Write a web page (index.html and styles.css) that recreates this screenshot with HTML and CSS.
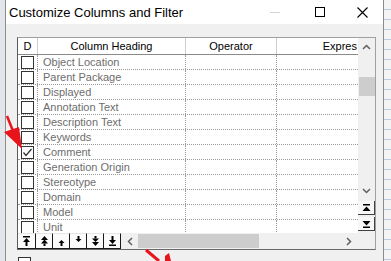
FILE: index.html
```html
<!DOCTYPE html>
<html lang="en">
<head>
    <meta charset="UTF-8">
    <meta name="viewport" content="width=device-width, initial-scale=1.0">
    <title>Customize Columns and Filter</title>
    <link rel="stylesheet" href="styles.css">
</head>
<body>
    <div class="desk">
        <div class="edge-left"></div>
        <div class="dialog">
            <div class="titlebar">
                <span class="title">Customize Columns and Filter</span>
                <div class="caption">
                    <span class="cap"><span class="cap-min"></span></span>
                    <span class="cap"><span class="cap-max"></span></span>
                    <span class="cap cap-close">
                        <svg width="11" height="11" viewBox="0 0 11 11"><path d="M0.5 0.5 L10.5 10.5 M10.5 0.5 L0.5 10.5" stroke="#000" stroke-width="1.1" fill="none"/></svg>
                    </span>
                </div>
            </div>
            <div class="dialog-body">
                <div class="grid">
                    <div class="grid-main">
                        <div class="table">
                            <div class="thead">
                                <div class="th">D</div>
                                <div class="th">Column Heading</div>
                                <div class="th">Operator</div>
                                <div class="th th-last">Expres</div>
                            </div>
                            <div class="rows" id="rows"></div>
                        </div>
                        <div class="vscroll">
                            <div class="vs-arrow">
                                <svg width="9" height="6" viewBox="0 0 9 6"><polyline points="1,5 4.5,1.5 8,5" stroke="#606060" stroke-width="1.5" fill="none"/></svg>
                            </div>
                            <div class="vs-track"><div class="vs-thumb"></div></div>
                            <div class="vs-arrow">
                                <svg width="9" height="6" viewBox="0 0 9 6"><polyline points="1,1 4.5,4.5 8,1" stroke="#606060" stroke-width="1.5" fill="none"/></svg>
                            </div>
                            <div class="vs-btn">
                                <svg width="9" height="8" viewBox="0 0 9 8"><rect x="1" y="0" width="7" height="1.5" fill="#000"/><polygon points="4.5,2.5 8.5,7 0.5,7" fill="#000"/></svg>
                            </div>
                            <div class="vs-btn">
                                <svg width="9" height="8" viewBox="0 0 9 8"><polygon points="0.5,1 8.5,1 4.5,5.5" fill="#000"/><rect x="1" y="6.5" width="7" height="1.5" fill="#000"/></svg>
                            </div>
                        </div>
                    </div>
                    <div class="grid-foot">
                        <div class="nav-btns">
                            <span class="navbtn first">
                                <svg width="9" height="10" viewBox="0 0 9 10"><rect x="1" y="0" width="7" height="1.5"/><polygon points="4.5,2 8,6 1,6"/><rect x="3.5" y="6" width="2" height="4"/></svg>
                            </span>
                            <span class="navbtn">
                                <svg width="9" height="10" viewBox="0 0 9 10"><polygon points="4.5,0 8,4 1,4"/><polygon points="4.5,3.5 8,7.5 1,7.5"/><rect x="3.5" y="7.5" width="2" height="2.5"/></svg>
                            </span>
                            <span class="navbtn">
                                <svg width="9" height="10" viewBox="0 0 9 10"><polygon points="4.5,4 7.5,7 1.5,7"/><rect x="3.5" y="7" width="2" height="3"/></svg>
                            </span>
                            <span class="navbtn">
                                <svg width="9" height="10" viewBox="0 0 9 10"><rect x="3.5" y="0" width="2" height="3"/><polygon points="1.5,3 7.5,3 4.5,6"/></svg>
                            </span>
                            <span class="navbtn">
                                <svg width="9" height="10" viewBox="0 0 9 10"><rect x="3.5" y="0" width="2" height="2.5"/><polygon points="1,2.5 8,2.5 4.5,6"/><polygon points="1,6 8,6 4.5,10"/></svg>
                            </span>
                            <span class="navbtn">
                                <svg width="9" height="10" viewBox="0 0 9 10"><rect x="3.5" y="0" width="2" height="4"/><polygon points="1,4 8,4 4.5,8"/><rect x="1" y="8.5" width="7" height="1.5"/></svg>
                            </span>
                        </div>
                        <div class="hscroll">
                            <div class="hs-arrow">
                                <svg width="6" height="9" viewBox="0 0 6 9"><polyline points="5,1 1.5,4.5 5,8" stroke="#606060" stroke-width="1.5" fill="none"/></svg>
                            </div>
                            <div class="hs-track"><div class="hs-thumb"></div></div>
                            <div class="hs-arrow">
                                <svg width="6" height="9" viewBox="0 0 6 9"><polyline points="1,1 4.5,4.5 1,8" stroke="#606060" stroke-width="1.5" fill="none"/></svg>
                            </div>
                        </div>
                        <div class="corner"></div>
                    </div>
                </div>
                <div class="below"><span class="box"></span></div>
            </div>
        </div>
        <div class="edge-right"></div>
    </div>

    <svg class="marks" width="391" height="261" viewBox="0 0 391 261">
        <path d="M7 116 L13 131" stroke="#e8141b" stroke-width="2.5" fill="none"/>
        <polygon points="22,149 4,132 19,127" fill="#e8141b"/>
        <path d="M146 250 L159 261" stroke="#e8141b" stroke-width="3" fill="none"/>
        <polygon points="165,256 169,253 171,261 165,261" fill="#e8141b"/>
    </svg>

    <script>
        const FIELDS = [
            "Object Location", "Parent Package", "Displayed", "Annotation Text",
            "Description Text", "Keywords", "Comment", "Generation Origin",
            "Stereotype", "Domain", "Model", "Unit"
        ];
        const CHECKED = ["Comment"];

        const rows = document.getElementById("rows");
        FIELDS.forEach(name => {
            const row = document.createElement("div");
            row.className = "row";
            const mark = CHECKED.includes(name)
                ? '<svg width="11" height="11" viewBox="0 0 11 11"><polyline points="1.5,5.5 4,8.5 9.5,2" stroke="#333" stroke-width="1.3" fill="none"/></svg>'
                : "";
            row.innerHTML = `
                <div class="cell cell-check"><span class="box">${mark}</span></div>
                <div class="cell cell-name">${name}</div>
                <div class="cell"></div>
                <div class="cell cell-last"></div>`;
            rows.appendChild(row);
        });
    </script>
</body>
</html>
```

FILE: styles.css
```css
* {
    margin: 0;
    padding: 0;
    box-sizing: border-box;
}

body {
    width: 391px;
    height: 261px;
    overflow: hidden;
    position: relative;
    font-family: "Liberation Sans", Arial, sans-serif;
    font-size: 11px;
    background: #f0f0f0;
}

.desk {
    display: flex;
    height: 261px;
}

.edge-left {
    width: 6px;
    background: #e2e6ea;
    border-right: 1px solid #8c8c8c;
}

.edge-right {
    width: 8px;
    background: repeating-linear-gradient(to bottom, #f4f4f4 0, #f4f4f4 9px, #b9c9de 9px, #b9c9de 10px);
    border-left: 1px solid #8c8c8c;
}

.dialog {
    width: 377px;
    display: flex;
    flex-direction: column;
    overflow: hidden;
}

.titlebar {
    height: 24px;
    background: #fff;
    display: flex;
    align-items: center;
}

.title {
    padding-left: 3px;
    font-size: 13px;
    color: #000;
}

.caption {
    margin-left: auto;
    display: flex;
    height: 24px;
}

.cap {
    width: 45px;
    display: flex;
    align-items: center;
    justify-content: center;
}

.cap-close {
    width: 41px;
}

.cap-min {
    width: 10px;
    height: 1px;
    background: #d4d4d4;
}

.cap-max {
    width: 10px;
    height: 10px;
    border: 1px solid #000;
}

.dialog-body {
    flex: 1;
    padding: 13px 0 0 11px;
    background: #f0f0f0;
}

.grid {
    width: 359px;
    background: #fff;
    border: 1px solid #a0a0a0;
    border-left-color: #5a5a5a;
    border-bottom-color: #6a6a6a;
}

.grid-main {
    display: flex;
    height: 195px;
}

.table {
    width: 340px;
    overflow: hidden;
    display: flex;
    flex-direction: column;
}

.thead,
.row {
    display: grid;
    grid-template-columns: 20px 148px 91px 81px;
}

.thead {
    height: 17px;
    border-bottom: 1px solid #8a8a8a;
}

.th {
    border-right: 1px solid #cfcfcf;
    text-align: center;
    line-height: 16px;
    color: #000;
    white-space: nowrap;
}

.th-last {
    border-right: none;
    text-align: right;
    padding-right: 1px;
}

.rows {
    height: 178px;
    overflow: hidden;
}

.row {
    height: 15px;
    border-bottom: 1px dotted #9a9a9a;
}

.cell {
    border-right: 1px dotted #9a9a9a;
    white-space: nowrap;
}

.cell-last {
    border-right: none;
}

.cell-check {
    display: flex;
    align-items: flex-end;
    padding-left: 3px;
}

.box {
    display: inline-flex;
    align-items: center;
    justify-content: center;
    width: 13px;
    height: 13px;
    background: #fff;
    border: 1px solid #333;
}

.cell-name {
    padding-left: 5px;
    line-height: 14px;
    color: #6d6d6d;
}

.vscroll {
    width: 17px;
    background: #f0f0f0;
    display: flex;
    flex-direction: column;
}

.vs-arrow {
    height: 17px;
    display: flex;
    align-items: center;
    justify-content: center;
}

.vs-track {
    height: 127px;
    padding-top: 22px;
}

.vs-thumb {
    height: 19px;
    margin-left: 1px;
    background: #cdcdcd;
}

.vs-btn {
    height: 14px;
    margin-top: 2px;
    display: flex;
    align-items: center;
    justify-content: center;
    background: #f7f7f7;
    border-right: 1px solid #404040;
    border-bottom: 1px solid #404040;
}

.grid-foot {
    display: flex;
    height: 16px;
}

.nav-btns {
    display: flex;
}

.navbtn {
    width: 17px;
    height: 16px;
    display: flex;
    align-items: center;
    justify-content: center;
    background: #fbfbfb;
    border-top: 1px solid #e6e6e6;
    border-right: 1px solid #1a1a1a;
    border-bottom: 1px solid #1a1a1a;
}

.navbtn.first {
    width: 18px;
}

.navbtn svg {
    fill: #000;
}

.hscroll {
    width: 236px;
    display: flex;
    background: #f0f0f0;
}

.hs-arrow {
    width: 17px;
    display: flex;
    align-items: center;
    justify-content: center;
}

.hs-track {
    flex: 1;
    padding: 1px 0;
}

.hs-thumb {
    width: 121px;
    height: 100%;
    background: #cdcdcd;
}

.corner {
    flex: 1;
    background: #f0f0f0;
}

.below {
    padding: 7px 0 0 1px;
}

.marks {
    position: absolute;
    top: 0;
    left: 0;
    pointer-events: none;
}
```
